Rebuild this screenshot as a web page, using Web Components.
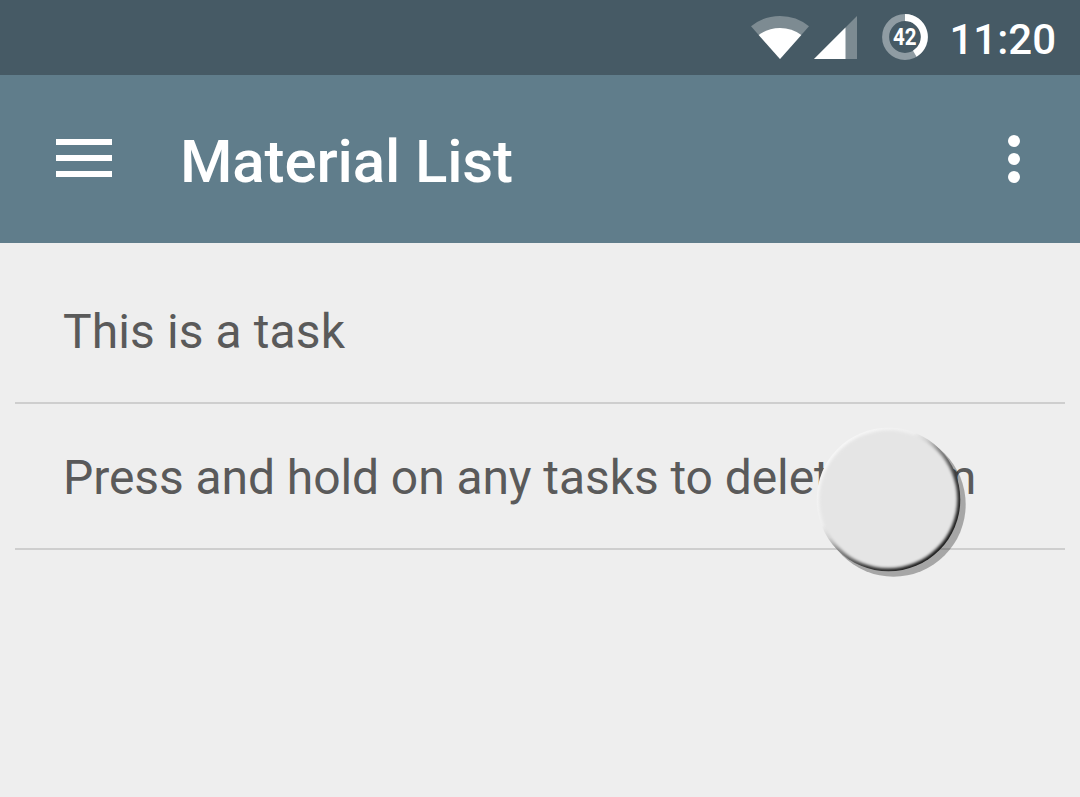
<!DOCTYPE html>
<html lang="en">
<head>
<meta charset="utf-8">
<title>Material List</title>
<style>
html,body{margin:0;height:100%;overflow:hidden;background:#eee;font-family:Roboto,sans-serif}
</style>
</head>
<body>
<material-app></material-app>
<script>
const define = (name, html) => customElements.define(name, class extends HTMLElement {
  constructor() {
    super();
    const t = document.createElement('template');
    t.innerHTML = html;
    this.attachShadow({mode: 'open'}).append(t.content.cloneNode(true));
  }
});

define('battery-ring', `
<style>:host{display:block;width:46px;height:46px}svg{display:block}text{font:700 24px Roboto,sans-serif}</style>
<svg width="46" height="46" viewBox="0 0 46 46" fill="none" stroke-width="7">
<circle cx="23" cy="23" r="19.4" stroke="#8f9ca3"/>
<path d="M23 3.6A19.4 19.4 0 0 1 32.8 39.7" stroke="#fff"/>
<text x="11" y="31.3" fill="#fff" textLength="23.6" lengthAdjust="spacingAndGlyphs">42</text>
</svg>`);

define('status-bar', `
<style>
:host{display:flex;height:75px;background:#465a65;color:#fff;justify-content:flex-end;align-items:flex-start;box-sizing:border-box;padding:14px 24px 0 0}
svg{display:block}
.signal{margin:2px 0 0 5px}
.wifi{margin-top:2px}
battery-ring{margin-left:25px}
.clock{font-size:42px;font-weight:500;line-height:50px;margin:1px 0 0 21px;white-space:nowrap}
</style>
<svg class="wifi" width="58" height="43" viewBox="0 0 58 43"><path d="M0 10.3Q12.5 0 29 0T58 10.3L29 43Z" fill="#7d8b92"/><path d="M7.7 19Q17 12 29 12T50.3 19L29 43Z" fill="#fff"/></svg>
<svg class="signal" width="43" height="43" viewBox="0 0 43 43"><path d="M43 0V43H0Z" fill="#7d8b92"/><path d="M31.5 11.5V43H0Z" fill="#fff"/></svg>
<battery-ring></battery-ring>
<div class="clock">11:20</div>`);

define('app-bar', `
<style>
:host{display:flex;height:168px;background:#607d8b;color:#fff;align-items:flex-start;box-sizing:border-box;padding:0 60px 0 56px}
svg{display:block}
.menu{margin-top:64px}
.more{margin:60px 0 0 auto}
h1{margin:52px 0 0 68px;font-size:60px;font-weight:500;line-height:70px;white-space:nowrap;letter-spacing:-.12px}
</style>
<svg class="menu" width="56" height="38" fill="#fff"><path d="M0 0H56V6H0ZM0 16H56V22H0ZM0 32H56V38H0Z"/></svg>
<h1><slot></slot></h1>
<svg class="more" width="12" height="48" fill="#fff"><circle cx="6" cy="6" r="6"/><circle cx="6" cy="24" r="6"/><circle cx="6" cy="42" r="6"/></svg>`);

define('task-item', `
<style>
:host{display:block;height:146px;box-sizing:border-box;border-bottom:2px solid #cecece;padding:46px 0 0 48px;font-size:48px;line-height:56px;color:#5a5a5a;white-space:nowrap}
:host(:first-child){letter-spacing:.1px}
:host(:last-child){letter-spacing:-.08px}
</style><slot></slot>`);

define('task-list', `
<style>:host{display:block;padding:15px 15px 0}</style><slot></slot>`);

define('floating-button', `
<style>:host{display:block;position:absolute;left:810px;top:420px;width:164px;height:164px}svg{display:block}</style>
<svg width="164" height="164" viewBox="0 0 164 164">
<defs>
<linearGradient id="edge" x1="0" y1="0" x2="1" y2="1"><stop offset=".12" stop-color="#f8f8f8"/><stop offset=".36" stop-color="#efefef"/><stop offset=".43" stop-color="#ccc"/><stop offset=".5" stop-color="#888"/><stop offset=".66" stop-color="#333"/><stop offset=".86" stop-color="#181818"/></linearGradient>
<filter id="soft"><feGaussianBlur stdDeviation="1.5"/></filter>
<filter id="shade"><feGaussianBlur stdDeviation=".6"/></filter>
<clipPath id="disc"><circle cx="78.5" cy="79.5" r="71.8"/></clipPath>
</defs>
<circle cx="83.5" cy="84.5" r="72.2" fill="#000" fill-opacity=".3" filter="url(#shade)"/>
<circle cx="78.5" cy="79.5" r="71.8" fill="url(#edge)"/>
<g clip-path="url(#disc)"><circle cx="78.3" cy="79.3" r="69" fill="#e5e5e5" filter="url(#soft)"/></g>
</svg>`);

define('material-app', `
<style>:host{display:block;position:relative;height:797px;background:#eee;overflow:hidden}</style>
<status-bar></status-bar>
<app-bar>Material List</app-bar>
<task-list><task-item>This is a task</task-item><task-item>Press and hold on any tasks to delete them</task-item></task-list>
<floating-button></floating-button>`);
</script>
</body>
</html>
